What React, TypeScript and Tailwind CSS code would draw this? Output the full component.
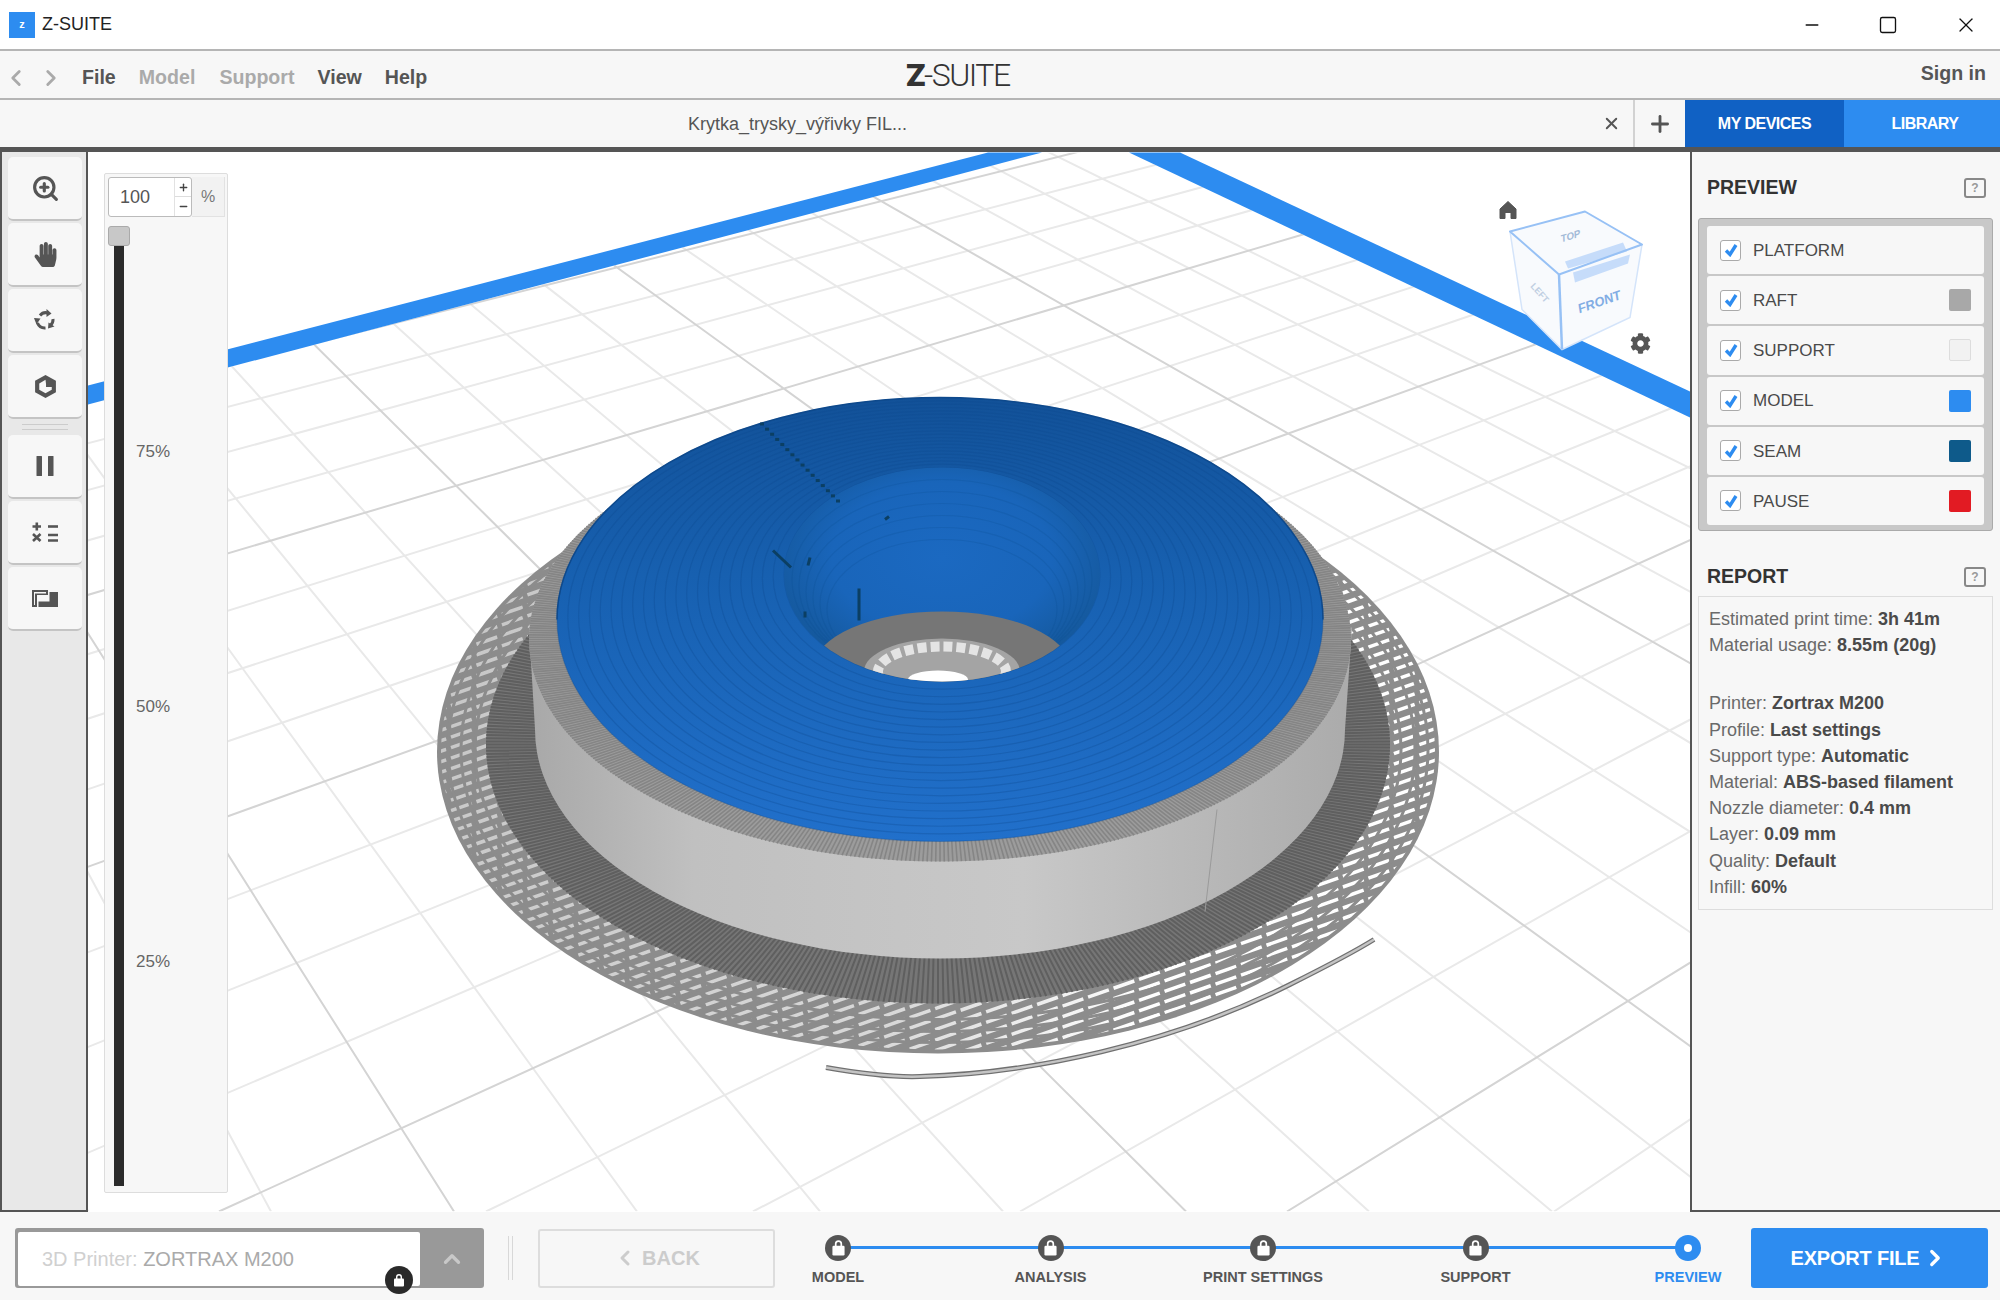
import { Minus, Plus, Square, X, ChevronLeft, ChevronRight, ChevronUp, ZoomIn } from "lucide-react";
import { FaHandPaper, FaCog } from "react-icons/fa";

const font = "font-['Liberation_Sans',Arial,sans-serif]";

const grey = "#555555";

// grid lines run towards two vanishing points of the platform, every 4th one is darker
const vpA = { x: 4320, y: -660 };
const vpB = { x: -790, y: -753 };
const gridLine = (vp: { x: number; y: number }, x0: number) => `M${vp.x} ${vp.y}L${x0} 1212`;

const aLines = Array.from({ length: 22 }, (_, i) => {
  const k = i - 7;
  return { k, x0: k > 0 ? 219 - 267 * k - 1.15 * k * k : 219 - 267 * k };
});
const bLines = Array.from({ length: 27 }, (_, i) => ({ k: i, x0: -278 + 183 * i }));

const minorPath = [
  ...aLines.filter((l) => l.k % 4 !== 0).map((l) => gridLine(vpA, l.x0)),
  ...bLines.filter((l) => l.k % 4 !== 0).map((l) => gridLine(vpB, l.x0)),
].join("");
const majorPath = [
  ...aLines.filter((l) => l.k % 4 === 0).map((l) => gridLine(vpA, l.x0)),
  ...bLines.filter((l) => l.k % 4 === 0).map((l) => gridLine(vpB, l.x0)),
].join("");

// short strokes from centre outwards, for the striped rings
const radial = (cx: number, cy: number, rx: number, ry: number, inner: number, n: number) => {
  let d = "";
  for (let i = 0; i < n; i++) {
    const a = (i / n) * Math.PI * 2;
    const c = Math.cos(a);
    const s = Math.sin(a);
    d += `M${(cx + rx * inner * c).toFixed(1)} ${(cy + ry * inner * s).toFixed(1)}L${(cx + rx * c).toFixed(1)} ${(cy + ry * s).toFixed(1)}`;
  }
  return d;
};

// slots of the perforated raft
const raftHatch = Array.from({ length: 96 }, (_, i) => {
  const y = 250 + i * 10.5;
  return `M400 ${y + 180}L1500 ${y - 205}`;
}).join("");

const raftRows = [
  { rx: 463, ry: 270 },
  { rx: 477, ry: 282 },
  { rx: 490, ry: 293 },
];

const darkRing = radial(938, 745, 452, 259, 0.8, 520);
const bandRing = radial(940, 640, 411, 222, 0.85, 600);

const contours = Array.from({ length: 22 }, (_, i) => {
  const t = i / 21;
  return {
    cx: 940 + t * 2,
    cy: 620 - t * 45,
    rx: 383 - t * 225,
    ry: 222 - t * 115,
  };
});

const funnelRings = Array.from({ length: 6 }, (_, i) => ({
  cy: 580 + i * 6,
  rx: 150 - i * 7,
  ry: 100 - i * 6,
}));

const seamDots = Array.from({ length: 16 }, (_, i) => ({
  x: 760 + (76 * i) / 15,
  y: 423 + (77 * i) / 15,
}));

const strip = "M826 1068C860 1074 890 1078 920 1077C1030 1074 1170 1045 1290 985C1320 970 1350 955 1374 940";

function Scene() {
  return (
    <svg viewBox="88 153 1602 1059" className="absolute inset-0 w-full h-full bg-white">
      <defs>
        <clipPath id="platform">
          <polygon points="88,405 1042,153 1129,153 1690,418 1690,1212 88,1212" />
        </clipPath>
        <clipPath id="raftEdge">
          <ellipse cx="938" cy="752" rx="497" ry="298" />
        </clipPath>
        <clipPath id="throat">
          <ellipse cx="942" cy="575" rx="158" ry="107" />
        </clipPath>
        <linearGradient id="slots" gradientUnits="userSpaceOnUse" x1="500" y1="600" x2="1300" y2="1000">
          <stop offset="0" stopColor="#c8c8c8" />
          <stop offset="0.6" stopColor="#d8d8d8" />
          <stop offset="0.85" stopColor="#ffffff" />
        </linearGradient>
        <linearGradient id="wall" x1="0" x2="1" y1="0" y2="0">
          <stop offset="0" stopColor="#a8a8a8" />
          <stop offset="0.2" stopColor="#c0c0c0" />
          <stop offset="0.6" stopColor="#c8c8c8" />
          <stop offset="1" stopColor="#ababab" />
        </linearGradient>
        <linearGradient id="blueTop" x1="0" x2="0" y1="0" y2="1">
          <stop offset="0" stopColor="#125198" />
          <stop offset="0.4" stopColor="#1760b0" />
          <stop offset="1" stopColor="#2170cb" />
        </linearGradient>
        <radialGradient id="funnel" cx="0.5" cy="0.42" r="0.58">
          <stop offset="0" stopColor="#1b69c1" />
          <stop offset="0.6" stopColor="#1965ba" />
          <stop offset="1" stopColor="#145799" />
        </radialGradient>
      </defs>

      <path d={minorPath} clipPath="url(#platform)" stroke="#e9e9e9" strokeWidth="2" fill="none" />
      <path d={majorPath} clipPath="url(#platform)" stroke="#d4d4d4" strokeWidth="2" fill="none" />
      <polygon points="88,386 988,153 1042,153 88,405" fill="#2d8cf0" />
      <polygon points="1129,153 1180,153 1690,392 1690,418" fill="#2d8cf0" />

      {/* raft */}
      <ellipse cx="938" cy="752" rx="501" ry="302" fill="#8c8c8c" />
      <path d={raftHatch} clipPath="url(#raftEdge)" stroke="url(#slots)" strokeWidth="3.5" strokeDasharray="22 5" fill="none" />
      {raftRows.map((r) => (
        <ellipse key={r.rx} cx="938" cy="750" rx={r.rx} ry={r.ry} fill="none" stroke="#8c8c8c" strokeWidth="3" />
      ))}
      <ellipse cx="938" cy="745" rx="452" ry="259" fill="#767676" />
      <path d={darkRing} stroke="#5f5f5f" strokeWidth="2" fill="none" />

      {/* wall */}
      <path d="M529 628L535 730A405 229 0 0 0 1345 730L1352 628Z" fill="url(#wall)" />
      <path d="M1217 810L1205 912" stroke="#9a9a9a" strokeWidth="1" />
      <ellipse cx="940" cy="640" rx="411" ry="222" fill="#9c9c9c" />
      <path d={bandRing} stroke="#858585" strokeWidth="1.6" fill="none" />

      {/* blue top */}
      <ellipse cx="940" cy="620" rx="383" ry="222" fill="url(#blueTop)" />
      <path d="M557 620A383 222 0 0 1 1323 620" fill="none" stroke="#0f4a8c" strokeWidth="1.5" />
      {contours.map((c) => (
        <ellipse key={c.rx} cx={c.cx} cy={c.cy} rx={c.rx} ry={c.ry} fill="none" stroke="#0c4a8e" strokeOpacity="0.3" strokeWidth="1.2" />
      ))}
      <ellipse cx="942" cy="575" rx="158" ry="107" fill="url(#funnel)" />
      <g clipPath="url(#throat)">
        {funnelRings.map((r) => (
          <ellipse key={r.rx} cx="942" cy={r.cy} rx={r.rx} ry={r.ry} fill="none" stroke="#0c4a8e" strokeOpacity="0.2" strokeWidth="1.2" />
        ))}
        <ellipse cx="942" cy="668" rx="128" ry="56" fill="#767676" />
        <ellipse cx="942" cy="672" rx="78" ry="33" fill="#a4a4a4" />
        <ellipse cx="942" cy="672" rx="64" ry="25" fill="none" stroke="#e4e4e4" strokeWidth="10" strokeDasharray="9 4" />
        <ellipse cx="938" cy="680" rx="30" ry="9" fill="#ffffff" />
      </g>

      {/* seam */}
      {seamDots.map((p) => (
        <rect key={p.x} x={p.x} y={p.y} width="4" height="3" fill="#0b3f63" />
      ))}
      <path d="M773 551L791 568M859 589V621M885 520L889 517M810 558L808 566M805 612V618" stroke="#0b3f63" strokeWidth="3" fill="none" />

      {/* loose raft strips */}
      <path d={strip} stroke="#707070" strokeWidth="5" fill="none" />
      <path d={strip} stroke="#c4c4c4" strokeWidth="2.5" fill="none" />

      {/* view cube */}
      <polygon points="1510,232 1585,212 1642,245 1630,318 1562,350 1522,310" fill="#f8fafd" />
      <path d="M1510 232L1522 310L1562 350L1630 318L1642 245" stroke="#d4e4fa" strokeWidth="1.5" fill="none" />
      <polygon points="1565,262 1623,243 1627,252 1568,269" fill="#c6dcfa" />
      <polygon points="1573,273 1630,255 1628,264 1575,283" fill="#c6dcfa" />
      <polygon points="1510,232 1585,212 1642,245 1559,275" fill="none" stroke="#97c1f5" strokeWidth="2" strokeLinejoin="round" />
      <path d="M1559 275L1562 350" stroke="#97c1f5" strokeWidth="2.5" fill="none" />
      <text x="0" y="0" transform="translate(1561,243) rotate(-17) skewX(-15)" fontSize="10" fontWeight="700" fill="#a3bbd8" fontFamily="Liberation Sans">TOP</text>
      <text x="0" y="0" transform="translate(1579,314) rotate(-19) skewX(-10)" fontSize="13" fontWeight="700" fill="#82ade4" fontFamily="Liberation Sans">FRONT</text>
      <text x="0" y="0" transform="translate(1530,287) rotate(48)" fontSize="9" fontWeight="700" fill="#c0cfe2" fontFamily="Liberation Sans">LEFT</text>
      <path d="M1508 202L1516 209.5V219H1511V213H1505V219H1500V209.5Z" fill={grey} stroke={grey} strokeLinejoin="round" />
    </svg>
  );
}

function RotateIcon() {
  return (
    <svg viewBox="0 0 24 24" className="w-[24px] h-[24px]" fill="none" stroke={grey} strokeWidth="3">
      <path d="M7 7.5A7.5 7.5 0 0 1 15 5" />
      <path d="M20 11A8 8 0 0 1 17 18" />
      <path d="M12.5 20A8 8 0 0 1 4.5 15" />
      <polygon points="13.5,1 18.5,5.5 13.5,9" fill={grey} stroke="none" />
      <polygon points="21.5,18.5 15,20.5 15.5,14.5" fill={grey} stroke="none" />
      <polygon points="1,10 7.5,10.5 3.5,16.5" fill={grey} stroke="none" />
    </svg>
  );
}

function CubeIcon() {
  return (
    <svg viewBox="0 0 24 24" className="w-[25px] h-[25px]">
      <polygon points="12,1 22,6.5 22,17.5 12,23 2,17.5 2,6.5" fill={grey} />
      <polygon points="12,5.5 6,9 6,15 12,18.5 18,15 18,12.5 12.5,12.5 12.5,9.5" fill="#f7f7f7" />
    </svg>
  );
}

function PauseIcon() {
  return (
    <svg viewBox="0 0 18 20" className="w-[18px] h-[20px]" fill={grey}>
      <rect x="0.5" y="0" width="5.5" height="20" rx="0.5" />
      <rect x="12" y="0" width="5.5" height="20" rx="0.5" />
    </svg>
  );
}

function MathIcon() {
  return (
    <svg viewBox="0 0 26 20" className="w-[26px] h-[20px]" stroke={grey} strokeWidth="2.6" fill="none">
      <path d="M0.5 4.5H9M4.8 0.5V8.5" />
      <path d="M16 4.5H26" />
      <path d="M1 12L8.5 19M8.5 12L1 19" />
      <path d="M16 13H26M16 18.5H26" />
    </svg>
  );
}

function LayoutIcon() {
  return (
    <svg viewBox="0 0 26 17" className="w-[26px] h-[17px]" fill={grey}>
      <path d="M0 0H16V5H5V17H0Z M2 2V15H3V3.5H14V2Z" fillRule="evenodd" />
      <path d="M6.5 17V11.5H17.5V2H26V17Z" />
    </svg>
  );
}

function LockIcon({ className }: { className: string }) {
  return (
    <svg viewBox="0 0 12 14" className={className} fill="#ffffff">
      <path d="M3 6V4A3 3 0 0 1 9 4V6H7.6V4A1.6 1.6 0 0 0 4.4 4V6Z" />
      <rect x="1" y="5.5" width="10" height="8" rx="1" />
    </svg>
  );
}

function HelpBox() {
  return (
    <div className="w-[22px] h-[20px] border-2 border-[#888888] rounded-[3px] flex items-center justify-center text-[12px] font-bold text-[#999999] leading-none">
      ?
    </div>
  );
}

function ToolButton({ children }: { children: React.ReactNode }) {
  return (
    <div className="w-[74px] h-[64px] bg-[#f7f7f7] rounded-[5px] border-b-2 border-[#c4c4c4] flex items-center justify-center">
      {children}
    </div>
  );
}

const previewRows = [
  { label: "PLATFORM", swatch: "" },
  { label: "RAFT", swatch: "bg-[#a8a8a8]" },
  { label: "SUPPORT", swatch: "bg-[#f2f2f2] border border-[#dddddd]" },
  { label: "MODEL", swatch: "bg-[#2d8cf0]" },
  { label: "SEAM", swatch: "bg-[#0e5a8a]" },
  { label: "PAUSE", swatch: "bg-[#e21b23]" },
];

const reportTop = [
  ["Estimated print time:", "3h 41m"],
  ["Material usage:", "8.55m (20g)"],
];

const reportBottom = [
  ["Printer:", "Zortrax M200"],
  ["Profile:", "Last settings"],
  ["Support type:", "Automatic"],
  ["Material:", "ABS-based filament"],
  ["Nozzle diameter:", "0.4 mm"],
  ["Layer:", "0.09 mm"],
  ["Quality:", "Default"],
  ["Infill:", "60%"],
];

const steps = ["MODEL", "ANALYSIS", "PRINT SETTINGS", "SUPPORT", "PREVIEW"];

function ReportLine({ label, value }: { label: string; value: string }) {
  return (
    <div className="h-[26.2px] leading-[26.2px] whitespace-nowrap">
      {label} <span className="font-bold text-[#4a4a4a]">{value}</span>
    </div>
  );
}

export default function App() {
  return (
    <div className={`w-[2000px] h-[1300px] flex flex-col overflow-hidden bg-white ${font}`}>
      {/* title bar */}
      <div className="h-[49px] shrink-0 flex items-center pl-[9px] bg-white">
        <div className="w-[26px] h-[26px] bg-[#2d8cf0] flex items-center justify-center text-white text-[11px] font-bold">z</div>
        <span className="ml-[7px] text-[18px] text-[#222222]">Z-SUITE</span>
        <div className="ml-auto flex items-center text-[#111111]">
          <Minus size={20} strokeWidth={1.6} className="mr-[56px]" />
          <Square size={20} strokeWidth={1.6} className="mr-[56px]" />
          <X size={24} strokeWidth={1.3} className="mr-[22px]" />
        </div>
      </div>

      {/* menu bar */}
      <div className="relative h-[51px] shrink-0 flex items-center pt-[6px] bg-[#f7f7f7] border-t-2 border-b-2 border-[#b5b5b5] text-[19.6px] font-bold text-[#555555]">
        <ChevronLeft size={26} strokeWidth={2.6} className="ml-[3px] text-[#aaaaaa]" />
        <ChevronRight size={26} strokeWidth={2.6} className="ml-[9px] text-[#aaaaaa]" />
        <span className="ml-[18px]">File</span>
        <span className="ml-[23px] text-[#aaaaaa]">Model</span>
        <span className="ml-[24px] text-[#aaaaaa]">Support</span>
        <span className="ml-[23px]">View</span>
        <span className="ml-[23px]">Help</span>
        <div className="absolute left-[906px] top-[5px] flex items-baseline text-[32px] leading-[38px] text-[#333333] font-['Roboto',sans-serif] font-light tracking-[-1.5px]">
          <span className="font-black">Z</span>
          <span>-SUITE</span>
        </div>
        <span className="ml-auto mr-[14px] -mt-[7px]">Sign in</span>
      </div>

      {/* tab bar */}
      <div className="h-[47px] shrink-0 flex items-center bg-[#f7f7f7] text-[#555555]">
        <div className="w-[1635px] h-full flex items-center border-r-2 border-[#d2d2d2]">
          <span className="ml-[688px] pt-[1px] text-[18px]">Krytka_trysky_výřivky FIL...</span>
          <X size={19} strokeWidth={2.4} className="ml-auto mr-[12px]" />
        </div>
        <div className="w-[50px] flex justify-center">
          <Plus size={26} strokeWidth={2.6} />
        </div>
        <div className="w-[159px] h-full bg-[#1061c4] text-white text-[16px] tracking-[-0.5px] font-bold flex items-center justify-center">MY DEVICES</div>
        <div className="flex-1 h-full bg-[#2d8cf0] text-white text-[16px] tracking-[-0.5px] font-bold flex items-center justify-center pl-[6px]">LIBRARY</div>
      </div>
      <div className="h-[5px] shrink-0 bg-[#555555]" />

      {/* main */}
      <div className="flex-1 min-h-0 flex">
        <div className="w-[88px] shrink-0 bg-[#e8e8e8] border-l-2 border-r-2 border-b-2 border-[#555555] pl-[6px] pt-[5px] flex flex-col gap-[2px]">
          <ToolButton>
            <ZoomIn size={29} strokeWidth={2.6} color={grey} />
          </ToolButton>
          <ToolButton>
            <FaHandPaper size={25} color={grey} />
          </ToolButton>
          <ToolButton>
            <RotateIcon />
          </ToolButton>
          <ToolButton>
            <CubeIcon />
          </ToolButton>
          <div className="w-[46px] h-[6px] ml-[14px] my-[3px] border-y border-[#cccccc]" />
          <ToolButton>
            <PauseIcon />
          </ToolButton>
          <ToolButton>
            <MathIcon />
          </ToolButton>
          <ToolButton>
            <LayoutIcon />
          </ToolButton>
        </div>

        {/* viewport */}
        <div className="relative flex-1 min-w-0">
          <Scene />
          <FaCog size={21} color={grey} className="absolute left-[1542px] top-[181px]" />
          <div className="absolute left-[16px] top-[21px] w-[124px] h-[1020px] bg-[#f7f7f7] border border-[#dddddd] rounded-[2px] flex flex-col pt-[3px] pl-[3px]">
            <div className="flex h-[40px]">
              <div className="w-[84px] bg-white border border-[#bbbbbb] rounded-[3px] flex">
                <span className="flex-1 pl-[11px] text-[18px] leading-[38px] text-[#555555]">100</span>
                <div className="w-[17px] border-l border-[#e2e2e2] flex flex-col text-[#444444]">
                  <div className="h-[19px] border-b border-[#dddddd] flex items-center justify-center">
                    <Plus size={11} strokeWidth={3} />
                  </div>
                  <div className="flex-1 flex items-center justify-center">
                    <Minus size={11} strokeWidth={3} />
                  </div>
                </div>
              </div>
              <div className="w-[33px] bg-[#f2f2f2] border-b border-r border-[#e2e2e2] text-[16px] text-[#777777] flex items-center justify-center">%</div>
            </div>
            <div className="flex flex-1 mt-[9px]">
              <div className="w-[22px] flex flex-col items-center">
                <div className="w-[22px] h-[20px] bg-[#c8c8c8] border border-[#aaaaaa] rounded-[3px] shrink-0" />
                <div className="w-[10px] h-[940px] bg-[#2b2b2b]" />
              </div>
              <div className="ml-[6px] pt-[216px] flex flex-col gap-[236px] text-[17px] leading-[19px] text-[#666666]">
                <span>75%</span>
                <span>50%</span>
                <span>25%</span>
              </div>
            </div>
          </div>
        </div>

        {/* right panel */}
        <div className="w-[310px] shrink-0 bg-[#f7f7f7] border-l-2 border-b-2 border-[#555555] pl-[6px]">
          <div className="h-[66px] flex items-center pl-[9px] pr-[14px] pt-[6px] justify-between">
            <span className="text-[19.5px] font-bold text-[#333333]">PREVIEW</span>
            <HelpBox />
          </div>
          <div className="w-[295px] h-[313px] bg-[#c8c8c8] border border-[#aaaaaa] rounded-[3px] px-[8px] pt-[7px] pb-[5px] flex flex-col gap-[2px]">
            {previewRows.map((row) => (
              <div key={row.label} className="flex-1 bg-[#f7f7f7] rounded-[3px] flex items-center pl-[13px] pr-[13px]">
                <div className="w-[21px] h-[21px] bg-white border border-[#aaaaaa] rounded-[3px] flex items-center justify-center">
                  <svg viewBox="0 0 14 14" className="w-[14px] h-[14px]" fill="none" stroke="#2d8cf0" strokeWidth="3.4">
                    <path d="M2 7.5L6 11.5L12 2" />
                  </svg>
                </div>
                <span className="ml-[12px] pt-[1px] text-[17px] text-[#4a4a4a]">{row.label}</span>
                {row.swatch && <div className={`ml-auto w-[22px] h-[22px] rounded-[2px] ${row.swatch}`} />}
              </div>
            ))}
          </div>
          <div className="h-[65px] flex items-center pl-[9px] pr-[14px] pt-[27px] justify-between">
            <span className="text-[19.5px] font-bold text-[#333333]">REPORT</span>
            <HelpBox />
          </div>
          <div className="w-[295px] h-[314px] border border-[#dddddd] pl-[10px] pt-[9px] text-[18px] text-[#6a6a6a]">
            {reportTop.map(([label, value]) => (
              <ReportLine key={label} label={label} value={value} />
            ))}
            <div className="h-[32px]" />
            {reportBottom.map(([label, value]) => (
              <ReportLine key={label} label={label} value={value} />
            ))}
          </div>
        </div>
      </div>

      {/* bottom bar */}
      <div className="h-[88px] shrink-0 bg-[#f7f7f7] flex items-center pl-[15px] pt-[4px]">
        <div className="relative w-[469px] h-[60px] bg-[#999999] rounded-[3px] flex pt-[4px] pl-[3px] pb-[2px]">
          <div className="w-[402px] bg-white rounded-[2px] flex items-center pl-[24px] text-[20px] text-[#d0d0d0]">
            3D Printer:&nbsp;<span className="text-[#aaaaaa]">ZORTRAX M200</span>
          </div>
          <div className="flex-1 flex items-center justify-center">
            <ChevronUp size={26} strokeWidth={3} color="#c8c8c8" />
          </div>
          <div className="absolute left-[370px] top-[38px] w-[28px] h-[28px] rounded-full bg-[#2a2a2a] flex items-center justify-center">
            <LockIcon className="w-[12px] h-[14px]" />
          </div>
        </div>
        <div className="ml-[24px] w-[5px] h-[44px] border-x border-[#d8d8d8]" />
        <div className="ml-[25px] w-[237px] h-[59px] border-2 border-[#dddddd] rounded-[3px] flex items-center justify-center text-[20px] font-bold text-[#cccccc]">
          <ChevronLeft size={24} strokeWidth={3} className="mr-[5px]" />
          BACK
        </div>
        <div className="relative ml-[23px] w-[930px] flex justify-between mt-[4px]">
          <div className="absolute left-[40px] right-[40px] top-[11px] h-[3px] bg-[#2d8cf0]" />
          {steps.map((step, i) => (
            <div key={step} className="relative w-[80px] flex flex-col items-center">
              {i < 4 ? (
                <div className="w-[26px] h-[26px] rounded-full bg-[#555555] flex items-center justify-center">
                  <LockIcon className="w-[15px] h-[17px]" />
                </div>
              ) : (
                <div className="w-[26px] h-[26px] rounded-full bg-[#2d8cf0] flex items-center justify-center">
                  <div className="w-[8px] h-[8px] rounded-full bg-white" />
                </div>
              )}
              <span className={`mt-[7px] text-[14.5px] leading-[18px] font-bold whitespace-nowrap ${i === 4 ? "text-[#2d8cf0]" : "text-[#555555]"}`}>
                {step}
              </span>
            </div>
          ))}
        </div>
        <div className="ml-[23px] w-[237px] h-[60px] bg-[#2d8cf0] rounded-[3px] flex items-center justify-center text-[20px] tracking-[-0.2px] font-bold text-white">
          EXPORT FILE
          <ChevronRight size={26} strokeWidth={3} className="ml-[3px]" />
        </div>
      </div>
    </div>
  );
}
